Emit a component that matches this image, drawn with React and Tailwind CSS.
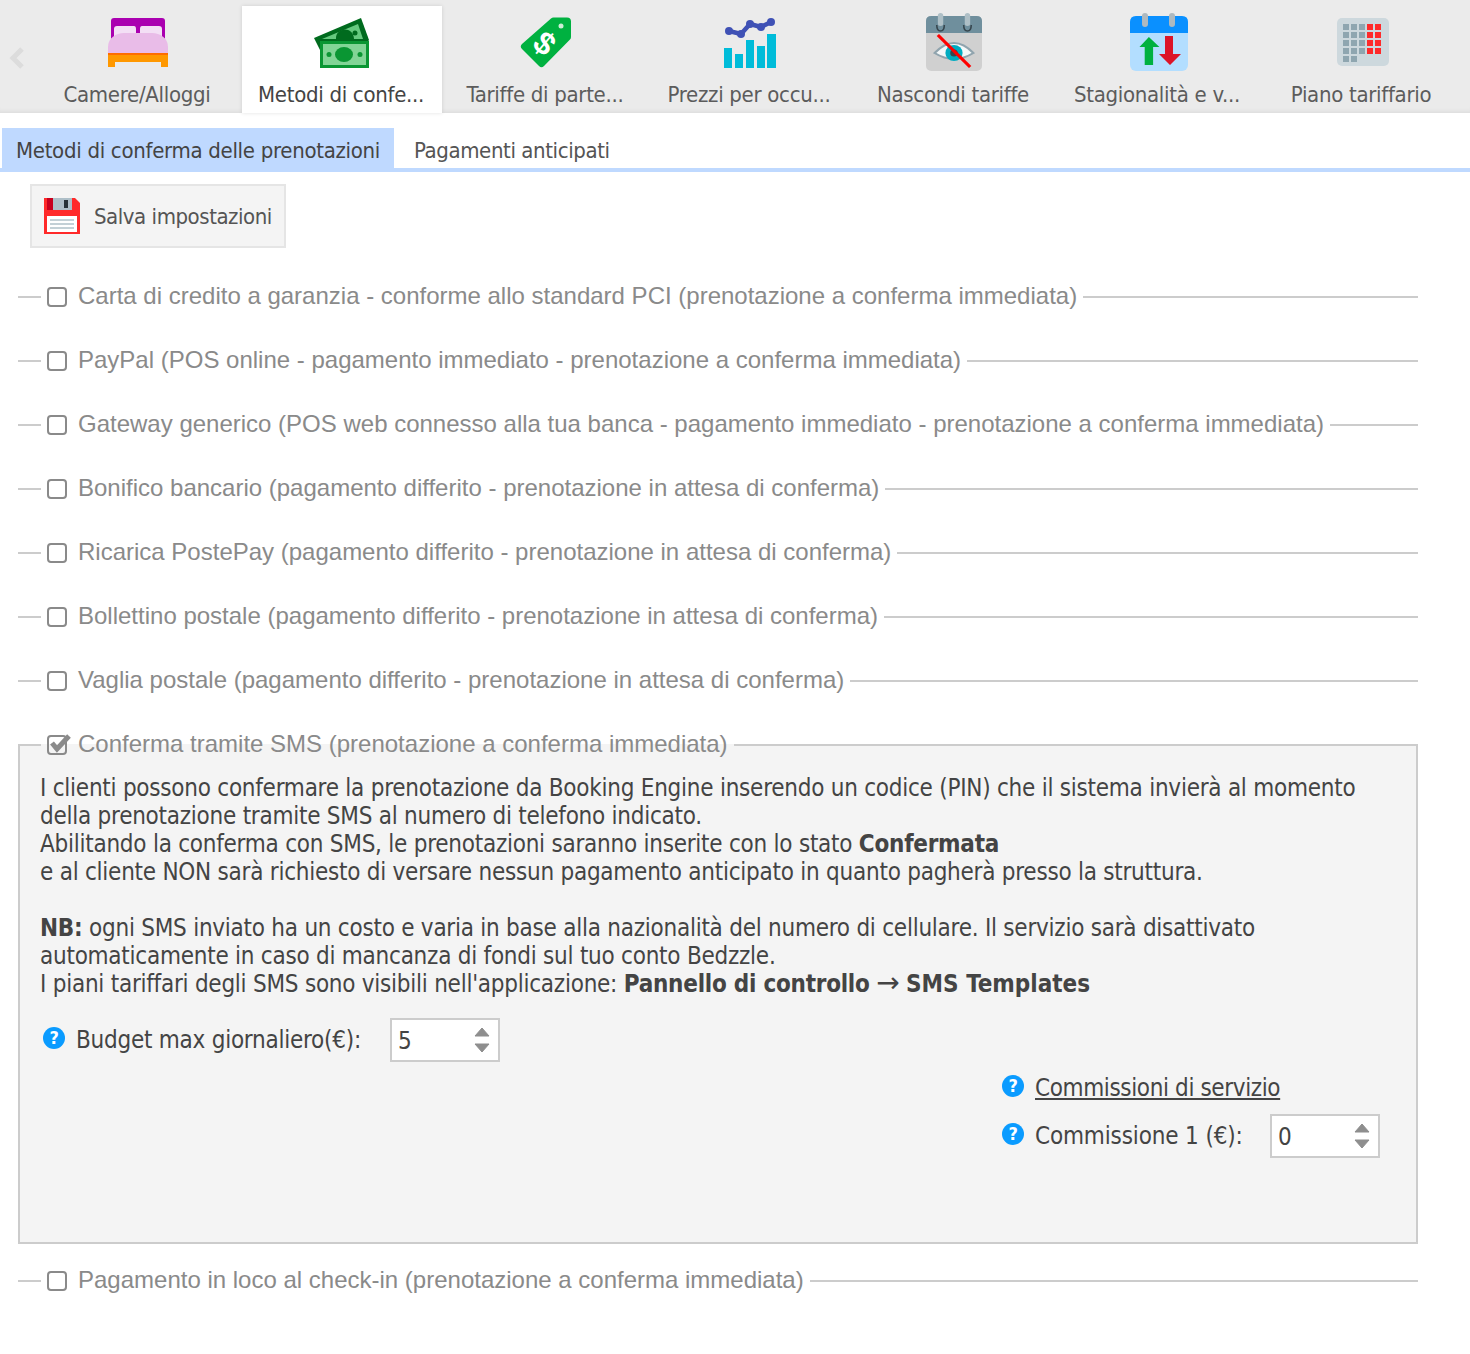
import React from "react";

const Bed = () => (
  <svg width="60" height="50" viewBox="0 0 60 50">
    <path d="M3 28V3a3 3 0 0 1 3-3h48a3 3 0 0 1 3 3v25z" fill="#aa00b0" />
    <path d="M6 22V11q0-3 3-3h17q2 0 2 3v11zM32 22V11q0-3 2-3h17q3 0 3 3v11z" fill="#f3dff5" />
    <path d="M0 35v-6C0 20 8 15 16 15h28c8 0 16 5 16 14v6z" fill="#e9bce8" />
    <rect x="0" y="35" width="60" height="2" fill="#ff6d00" />
    <path d="M0 37h60v12h-7v-5H7v5H0z" fill="#ff9800" />
  </svg>
);

const Money = () => (
  <svg width="56" height="52" viewBox="0 0 56 52">
    <path d="M1 21 48 1l8 22-8 12H8z" fill="#006b1e" />
    <path d="M9 22 45 7l5 15H9z" fill="#66c97f" />
    <path d="M27 24c-1-11 17-14 18 0z" fill="#006b1e" transform="translate(-4 -2)" />
    <circle cx="42" cy="16" r="2.5" fill="#006b1e" />
    <rect x="7" y="24" width="49" height="27" fill="#0a9633" />
    <rect x="10" y="27" width="43" height="21" fill="#82d596" />
    <ellipse cx="31" cy="37.5" rx="9" ry="7.5" fill="#0a9633" />
    <circle cx="16" cy="37.5" r="2.5" fill="#0a9633" />
    <circle cx="47" cy="37.5" r="2.5" fill="#0a9633" />
  </svg>
);

const Tag = () => (
  <svg width="52" height="52" viewBox="0 0 52 52">
    <path d="M31 1.5q1-1 2.500-1H47q4 0 4 4V20q0 1.500-1 2.500L24 49q-2.500 2.500-5 0L2 32q-2.500-2.500 0-5z" fill="#00b140" />
    <circle cx="41" cy="9" r="2.500" fill="#cdeed6" />
    <text x="24" y="37" fontSize="32" fontWeight="700" fill="#fff" textAnchor="middle" fontFamily="Liberation Sans, sans-serif" transform="rotate(40 24 27)">$</text>
  </svg>
);

const Chart = () => (
  <svg width="52" height="50" viewBox="0 0 52 50">
    <g fill="#00bcd9">
      <rect x="0" y="30" width="8" height="20" />
      <rect x="11" y="36" width="8" height="14" />
      <rect x="22" y="22" width="8" height="28" />
      <rect x="33" y="28" width="8" height="22" />
      <rect x="43" y="16" width="9" height="34" />
    </g>
    <path d="M5 13l12 3L26 6l11 3L47 4" stroke="#3f51b5" strokeWidth="4.500" fill="none" strokeLinecap="round" strokeLinejoin="round" />
    <g fill="#3f51b5">
      <circle cx="5" cy="13" r="4" />
      <circle cx="17" cy="16" r="4" />
      <circle cx="26" cy="6" r="4" />
      <circle cx="37" cy="9" r="4" />
      <circle cx="47" cy="4" r="4" />
    </g>
  </svg>
);

const CalHide = () => (
  <svg width="56" height="58" viewBox="0 0 52 58" preserveAspectRatio="none">
    <rect x="0" y="3" width="52" height="55" rx="5" fill="#d0d0d0" />
    <path d="M0 20V8q0-5 5-5h42q5 0 5 5v12z" fill="#6f8f9d" />
    <path d="M10 12q0 6 3.500 6t3.500-6M35 12q0 6 3.500 6t3.500-6" stroke="#37474f" strokeWidth="1.500" fill="none" />
    <rect x="11" y="0" width="5" height="13" rx="2.500" fill="#aebfc6" />
    <rect x="36" y="0" width="5" height="13" rx="2.500" fill="#aebfc6" />
    <path d="M8 40q18-20 36 0q-18 12-36 0z" fill="#f4f8f9" stroke="#90a4ae" strokeWidth="2" />
    <circle cx="26" cy="40" r="8" fill="#00acc1" />
    <circle cx="26" cy="40" r="3.500" fill="#37474f" />
    <path d="M11 25l30 32" stroke="#f00" strokeWidth="3" transform="translate(0 -3)" />
  </svg>
);

const CalArrows = () => (
  <svg width="58" height="58" viewBox="0 0 58 58">
    <rect x="0" y="3" width="58" height="55" rx="6" fill="#b3deff" />
    <path d="M0 20V9q0-6 6-6h46q6 0 6 6v11z" fill="#0a90ff" />
    <rect x="12" y="0" width="6" height="14" rx="3" fill="#aeb9bf" />
    <rect x="39" y="0" width="6" height="14" rx="3" fill="#aeb9bf" />
    <path d="M9 34 18 24l10 10h-6v18h-8V34z" fill="#00b140" transform="scale(1.050 1)" />
    <path d="M35 23h8v18h8L40 52 29 41h6z" fill="#dc1428" />
  </svg>
);

const Plan = () => (
  <svg width="52" height="50" viewBox="0 0 52 50">
    <rect width="52" height="48" rx="5" fill="#cdd8dd" />
    <g fill="#8fa6b0">
      {[0, 1, 2, 3].flatMap((r) =>
        [0, 1, 2].map((c) => <rect key={r + "-" + c} x={6 + c * 8} y={6 + r * 8} width="6" height="6" />)
      )}
      <rect x="6" y="38" width="6" height="6" />
      <rect x="14" y="38" width="6" height="6" />
    </g>
    <g fill="#ff2a2a">
      {[0, 1, 2, 3].flatMap((r) =>
        [0, 1].map((c) => <rect key={r + "_" + c} x={30 + c * 8} y={6 + r * 8} width="6" height="6" />)
      )}
    </g>
  </svg>
);

const Save = () => (
  <svg width="36" height="36" viewBox="0 0 36 36">
    <path d="M0 0h31l5 5v31H0z" fill="#ff2a2a" />
    <rect x="3" y="0" width="6" height="12" fill="#c8001e" />
    <rect x="9" y="0" width="19" height="12" fill="#aebfc8" />
    <rect x="20" y="2" width="4" height="8" fill="#263238" />
    <rect x="3" y="18" width="30" height="16" fill="#fff" />
    <g fill="#c3d0d6">
      <rect x="6" y="21" width="24" height="2" />
      <rect x="6" y="25" width="24" height="2" />
      <rect x="6" y="29" width="24" height="2" />
    </g>
  </svg>
);

const tabs = [
  { icon: <Bed />, label: "Camere/Alloggi", y: "pt-[12px]" },
  { icon: <Money />, label: "Metodi di confe...", active: true, y: "pt-[11px] pr-[2px]" },
  { icon: <Tag />, label: "Tariffe di parte...", y: "pt-[11px]" },
  { icon: <Chart />, label: "Prezzi per occu...", y: "pt-[12px]" },
  { icon: <CalHide />, label: "Nascondi tariffe", y: "pt-[7px]" },
  { icon: <CalArrows />, label: "Stagionalità e v...", y: "pt-[7px] pl-[1px]" },
  { icon: <Plan />, label: "Piano tariffario", y: "pt-[12px] pl-[1px]" },
];

const methods = [
  "Carta di credito a garanzia - conforme allo standard PCI (prenotazione a conferma immediata)",
  "PayPal (POS online - pagamento immediato - prenotazione a conferma immediata)",
  "Gateway generico (POS web connesso alla tua banca - pagamento immediato - prenotazione a conferma immediata)",
  "Bonifico bancario (pagamento differito - prenotazione in attesa di conferma)",
  "Ricarica PostePay (pagamento differito - prenotazione in attesa di conferma)",
  "Bollettino postale (pagamento differito - prenotazione in attesa di conferma)",
  "Vaglia postale (pagamento differito - prenotazione in attesa di conferma)",
];

const Box = ({ checked }) => (
  <span className="relative w-[20px] h-[20px] shrink-0 rounded-[4px] border-2 border-[#8a8a8a]">
    {checked && (
      <svg className="absolute left-[1px] top-[-4px]" width="22" height="20" viewBox="0 0 22 20">
        <path d="M2 10l5 6L19 3" stroke="#8a8a8a" strokeWidth="5" fill="none" />
      </svg>
    )}
  </span>
);

const Legend = ({ text, checked, inset }) => (
  <legend
    className={
      (inset ? "ml-[1px]" : "ml-[23px]") +
      " pl-[6px] pr-[6px] h-[28px] flex items-center gap-[11px] font-['Liberation_Sans',sans-serif] text-[24px] leading-[28px] tracking-normal text-[#8a8a8a]"
    }
  >
    <Box checked={checked} />
    <span className="mb-[2px]">{text}</span>
  </legend>
);

const Help = ({ className }) => (
  <span className={"w-[22px] h-[22px] shrink-0 rounded-full bg-[#0a9bff] text-white text-[18px] font-bold leading-[22px] text-center " + className}>?</span>
);

const Spin = ({ value }) => (
  <span className="w-[110px] h-[44px] border-2 border-[#ccc] bg-white flex items-center justify-between pl-[6px] pr-[8px] text-[#444] tracking-normal">
    <span className="mt-[2px]">{value}</span>
    <svg width="16" height="26" viewBox="0 0 16 26">
      <path d="M8 1l7 8H1zM1 17h14l-7 8z" fill="#8e8e8e" stroke="#8e8e8e" strokeLinejoin="round" />
    </svg>
  </span>
);

export default function App() {
  return (
    <div className="min-h-[1354px] bg-white font-['DejaVu_Sans_Condensed','DejaVu_Sans',sans-serif] text-[22px] tracking-[-0.3px] text-[#444] overflow-hidden">
      <div className="h-[113px] bg-[#ebebeb] flex items-end shadow-[inset_0_-5px_5px_-4px_rgba(0,0,0,0.08)]">
        <div className="w-[38px] h-full flex items-center justify-center pt-[3px] pr-[4px]">
          <svg width="17" height="24" viewBox="0 0 17 24">
            <path d="M13 3 4 12l9 9" stroke="#dcdcdc" strokeWidth="5" fill="none" />
          </svg>
        </div>
        <div className="flex gap-1">
          {tabs.map((t) => (
            <div
              key={t.label}
              className={
                "w-[200px] h-[107px] flex flex-col items-center " +
                (t.active ? "bg-white text-[#444] shadow-[0_0_4px_rgba(0,0,0,0.12)]" : "text-[#5c5c5c]")
              }
            >
              <div className={"h-[73px] " + t.y}>{t.icon}</div>
              <div className="h-[32px] leading-[32px] whitespace-nowrap pr-[2px]">{t.label}</div>
            </div>
          ))}
        </div>
      </div>

      <div className="mt-[15px] h-[44px] border-b-4 border-[#bfd9ff] flex pl-[2px]">
        <div className="h-[40px] bg-[#bfd9ff] px-[14px] leading-[46px] whitespace-nowrap">Metodi di conferma delle prenotazioni</div>
        <div className="h-[40px] px-[20px] leading-[46px] text-[#555] tracking-[-0.4px] whitespace-nowrap">Pagamenti anticipati</div>
      </div>

      <div className="ml-[30px] mt-[12px] w-[256px] h-[64px] border-2 border-[#e5e5e5] bg-[#f4f4f4] flex items-center gap-[14px] pl-[12px] text-[#555] tracking-[-0.45px]">
        <Save />
        <span className="whitespace-nowrap">Salva impostazioni</span>
      </div>

      <div className="ml-[18px] w-[1400px] mt-[35px] flex flex-col gap-[36px]">
        {methods.map((m) => (
          <fieldset key={m} className="border-0 border-t-2 border-[#ccc] min-w-0">
            <Legend text={m} />
          </fieldset>
        ))}

        <fieldset className="h-[513px] border-2 border-[#ccc] bg-[#f4f4f4] min-w-0 px-[20px] pt-[15px]">
          <Legend text="Conferma tramite SMS (prenotazione a conferma immediata)" checked inset />
          <div className="leading-[28px] text-[24px] tracking-[-0.25px]">
            I clienti possono confermare la prenotazione da Booking Engine inserendo un codice (PIN) che il sistema invierà al momento della prenotazione tramite SMS al numero di telefono indicato.
            <br />
            Abilitando la conferma con SMS, le prenotazioni saranno inserite con lo stato <b>Confermata</b>
            <br />
            e al cliente NON sarà richiesto di versare nessun pagamento anticipato in quanto pagherà presso la struttura.
            <br />
            <br />
            <b>NB:</b> ogni SMS inviato ha un costo e varia in base alla nazionalità del numero di cellulare. Il servizio sarà disattivato automaticamente in caso di mancanza di fondi sul tuo conto Bedzzle.
            <br />
            I piani tariffari degli SMS sono visibili nell'applicazione: <b>Pannello di controllo</b> <span className="font-['DejaVu_Sans',sans-serif] text-[28px] leading-[0]">→</span> <b className="tracking-normal">SMS Templates</b>
          </div>
          <div className="mt-[20px] flex items-center text-[24px] tracking-[-0.25px] pl-[3px]">
            <Help className="mb-[4px]" />
            <span className="ml-[11px] w-[314px]">Budget max giornaliero(€):</span>
            <Spin value="5" />
          </div>
          <div className="ml-[962px] mt-[6px] text-[24px]">
            <div className="flex items-center h-[40px] gap-[11px]">
              <Help className="mb-[4px]" />
              <span className="underline tracking-[-0.38px]">Commissioni di servizio</span>
            </div>
            <div className="flex items-center mt-[6px]">
              <Help className="mb-[4px]" />
              <span className="ml-[11px] w-[235px] tracking-[-0.15px]">Commissione 1 (€):</span>
              <Spin value="0" />
            </div>
          </div>
        </fieldset>

        <fieldset className="-mt-[13px] border-0 border-t-2 border-[#ccc] min-w-0">
          <Legend text="Pagamento in loco al check-in (prenotazione a conferma immediata)" />
        </fieldset>
      </div>
    </div>
  );
}
